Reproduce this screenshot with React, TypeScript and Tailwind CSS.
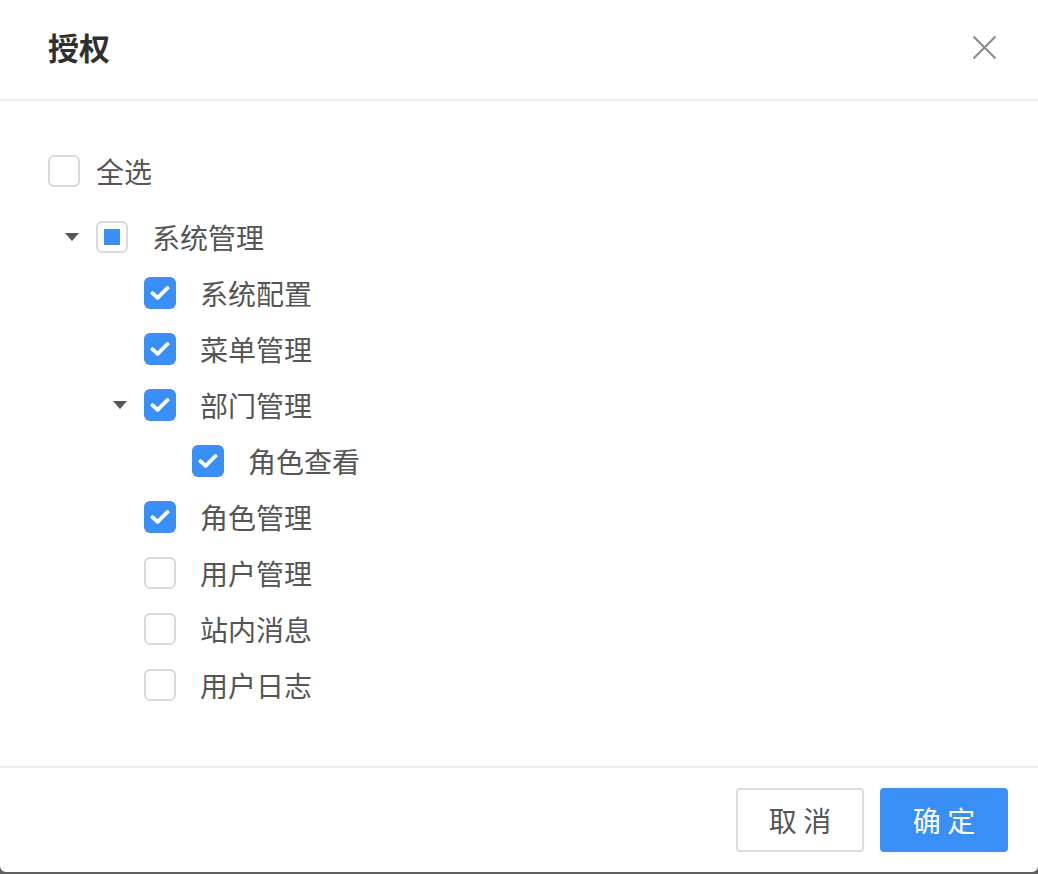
import React from 'react';

type Node = {
  label: string;
  level: number;
  state: 'checked' | 'unchecked' | 'partial';
  expandable?: boolean;
};

const nodes: Node[] = [
  { label: '系统管理', level: 0, state: 'partial', expandable: true },
  { label: '系统配置', level: 1, state: 'checked' },
  { label: '菜单管理', level: 1, state: 'checked' },
  { label: '部门管理', level: 1, state: 'checked', expandable: true },
  { label: '角色查看', level: 2, state: 'checked' },
  { label: '角色管理', level: 1, state: 'checked' },
  { label: '用户管理', level: 1, state: 'unchecked' },
  { label: '站内消息', level: 1, state: 'unchecked' },
  { label: '用户日志', level: 1, state: 'unchecked' },
];

const indent = ['pl-0', 'pl-12', 'pl-24'];

const Checkbox: React.FC<{ state: Node['state'] }> = ({ state }) => {
  if (state === 'checked') {
    return (
      <span className="flex h-8 w-8 shrink-0 items-center justify-center rounded-[6px] bg-[#3a8ff7]">
        <svg width="20" height="16" viewBox="0 0 20 16" fill="none">
          <path d="M2.5 8.2 L7.6 12.8 L17.5 3" stroke="white" strokeWidth="3.8" strokeLinecap="round" strokeLinejoin="round" />
        </svg>
      </span>
    );
  }
  return (
    <span className="flex h-8 w-8 shrink-0 items-center justify-center rounded-[6px] border-2 border-[#d9d9d9] bg-white">
      {state === 'partial' && <span className="h-4 w-4 bg-[#3a8ff7]" />}
    </span>
  );
};

const Caret = () => (
  <svg width="14" height="8" viewBox="0 0 14 8">
    <path d="M0 0 H14 L7 8 Z" fill="#555" />
  </svg>
);

export default function App() {
  return (
    <div className="h-[874px] w-full bg-[#5e5e5e] font-['Noto_Sans_CJK_SC',sans-serif]">
      <div className="flex h-[872px] flex-col rounded-b-[6px] bg-white">
        <div className="flex h-[101px] shrink-0 items-center justify-between border-b-2 border-[#ececec] pl-12 pr-[41px] pb-[4px]">
          <h1 className="text-[31px] font-bold text-[#303030]">授权</h1>
          <svg width="25" height="25" viewBox="0 0 25 25">
            <path d="M1.5 1.5 L23.5 23.5 M23.5 1.5 L1.5 23.5" stroke="#8c8c8c" strokeWidth="2.2" />
          </svg>
        </div>

        <div className="flex-1 px-12 pt-[42px]">
          <div className="flex h-14 items-center">
            <Checkbox state="unchecked" />
            <span className="ml-4 text-[28px] text-[#555]">全选</span>
          </div>
          <div className="mt-[10px]">
            {nodes.map((n) => (
              <div key={n.label} className={`flex h-14 items-center ${indent[n.level]}`}>
                <span className="flex w-12 shrink-0 items-center justify-center">
                  {n.expandable && <Caret />}
                </span>
                <Checkbox state={n.state} />
                <span className="ml-6 text-[28px] text-[#555]">{n.label}</span>
              </div>
            ))}
          </div>
        </div>

        <div className="flex h-[106px] shrink-0 items-start justify-end gap-4 border-t-2 border-[#ececec] pt-[20px] pr-[30px]">
          <button className="flex h-[64px] w-[128px] items-center justify-center rounded-[4px] border-2 border-[#dcdcdc] bg-white text-[28px] text-[#555]">
            取 消
          </button>
          <button className="flex h-[64px] w-[128px] items-center justify-center rounded-[4px] bg-[#3a8ff7] text-[28px] text-white">
            确 定
          </button>
        </div>
      </div>
    </div>
  );
}
